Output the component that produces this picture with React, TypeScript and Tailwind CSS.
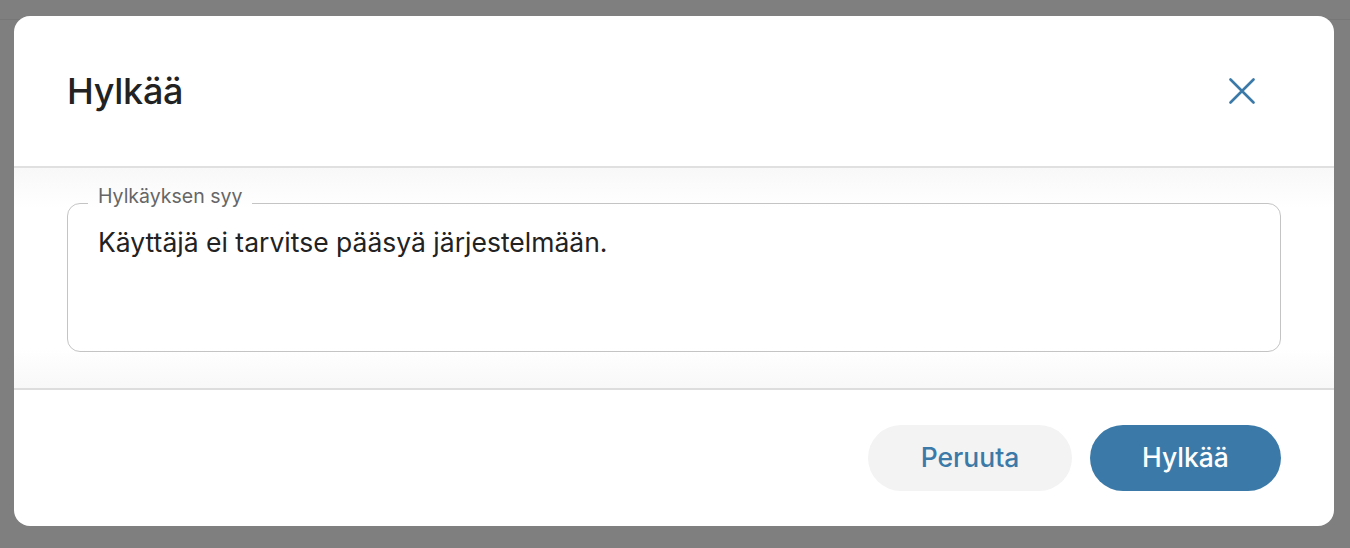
import React from "react";

export default function App() {
  return (
    <div
      className="relative w-[1350px] h-[548px] overflow-hidden bg-white"
      style={{ fontFamily: "Inter, 'Noto Sans', sans-serif" }}
    >
      {/* page behind */}
      <div className="h-[20px] border-b border-[#eeeeee]" />
      {/* overlay */}
      <div className="absolute inset-0 bg-black/50 pt-[16px] pl-[14px]">
        <div className="w-[1320px] h-[510px] rounded-[16px] bg-white flex flex-col overflow-hidden">
          {/* header */}
          <div className="h-[152px] shrink-0 border-b-2 border-[#e0e0e0] flex items-center justify-between px-[53px]">
            <h2 className="text-[36px] leading-none font-medium text-[#222222] tracking-[-0.3px]">Hylkää</h2>
            <button className="w-[52px] h-[52px] mr-[13px] flex items-center justify-center text-[#3b7aa8]">
              <svg width="26" height="26" viewBox="0 0 26 26" fill="none">
                <path d="M1.5 1.5 L24.5 24.5 M24.5 1.5 L1.5 24.5" stroke="currentColor" strokeWidth="2.6" strokeLinecap="round" />
              </svg>
            </button>
          </div>
          {/* content */}
          <div className="h-[222px] shrink-0 border-b-2 border-[#dddddd] px-[53px] pt-[19px] bg-[linear-gradient(to_bottom,#f8f8f8,#ffffff_40px,#ffffff_calc(100%-40px),#f8f8f8)]">
            <fieldset className="m-0 p-0 h-[165px] border-[1.5px] border-[#c4c4c4] rounded-[13px] flex flex-col">
              <legend className="ml-[20px] px-[10px] pb-[14px] text-[19.5px] leading-none text-[#666666]">
                Hylkäyksen syy
              </legend>
              <textarea
                readOnly
                className="w-full flex-1 resize-none bg-transparent outline-none pl-[30px] pr-[30px] pt-[3px] text-[26.5px] leading-[36px] text-[#222222]"
                value="Käyttäjä ei tarvitse pääsyä järjestelmään."
              />
            </fieldset>
          </div>
          {/* footer */}
          <div className="flex-1 flex items-center justify-end gap-[18px] px-[53px]">
            <button className="w-[204px] h-[66px] rounded-full bg-[#f3f3f3] text-[#3b7aa8] text-[26.5px] font-medium">
              Peruuta
            </button>
            <button className="w-[191px] h-[66px] rounded-full bg-[#3b7aa8] text-white text-[26.5px] font-medium">
              Hylkää
            </button>
          </div>
        </div>
      </div>
    </div>
  );
}
